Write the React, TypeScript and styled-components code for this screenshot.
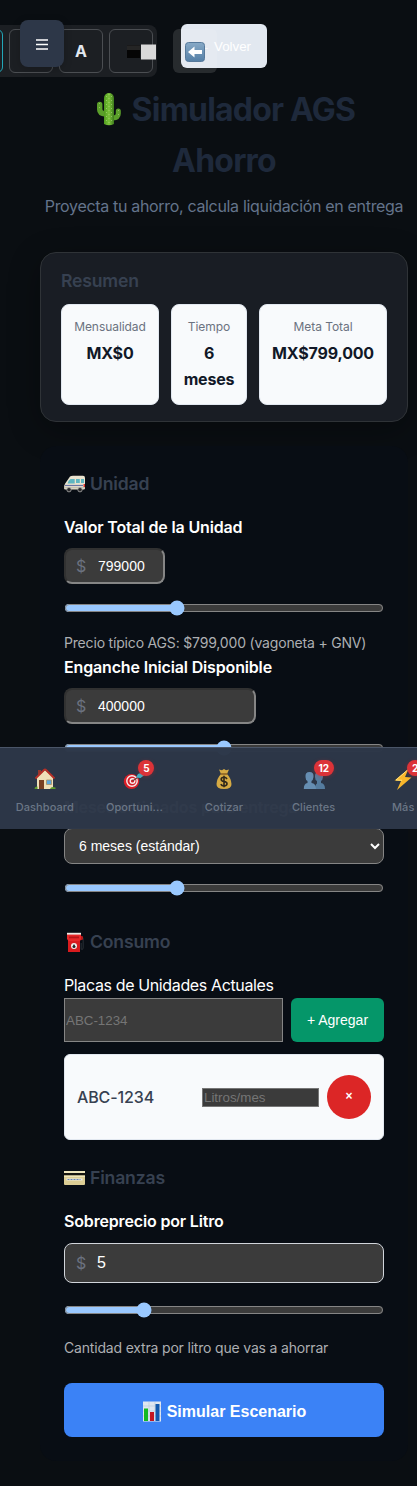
import React from "react";
import styled, { createGlobalStyle } from "styled-components";

const Global = createGlobalStyle`
  *, *::before, *::after { box-sizing: border-box; }
  html { background: #0a0e12; color-scheme: dark; overflow: hidden; }
  body {
    margin: 0;
    overflow: hidden;
    font-family: Inter, "Liberation Sans", sans-serif;
    font-size: 16px;
    line-height: 1.6;
    color: #fff;
  }
`;

const arial = `"Liberation Sans", Arial, sans-serif`;

const Page = styled.div`
  position: relative;
  width: 417px;
  height: 1486px;
  padding: 84px 9px 0 40px;
  overflow: hidden;
  background: #0a0e12;
`;

/* Floating controls */
const Toolbar = styled.div`
  position: absolute;
  top: 25px;
  right: 260px;
  display: flex;
  gap: 6px;
  padding: 4px;
  border-radius: 8px;
  background: #1c1f23;
`;

const ToolButton = styled.button<{ $active?: boolean }>`
  display: flex;
  align-items: center;
  justify-content: center;
  flex: none;
  width: 44px;
  height: 44px;
  padding: 0;
  border: 1px solid ${(p) => (p.$active ? "#22a7b8" : "#4b4e52")};
  border-radius: 6px;
  background: transparent;
  color: #e2e8f0;
  font: 700 16px Inter, sans-serif;
`;

const ContrastIcon = styled.svg`
  flex: none;
  margin-left: 19px;
  margin-top: 2px;
`;

const BackButton = styled.button`
  position: absolute;
  top: 24px;
  left: 181px;
  width: 86px;
  height: 44px;
  padding: 0;
  border: 0;
  border-radius: 6px;
  background: #e2e8f0;
  color: #fff;
  font: 13.333px ${arial};
`;

const BackTile = styled.div`
  position: absolute;
  top: 29px;
  left: 173px;
  display: flex;
  align-items: center;
  justify-content: center;
  width: 44px;
  height: 44px;
  padding-top: 2px;
  border-radius: 6px;
  background: rgba(255, 255, 255, 0.12);
`;

const MenuButton = styled.button`
  position: absolute;
  top: 20px;
  left: 20px;
  display: flex;
  align-items: center;
  justify-content: center;
  width: 44px;
  height: 47px;
  padding: 1px 0 0;
  border: 0;
  border-radius: 8px;
  background: #2d3748;
  box-shadow: 0 2px 8px rgba(0, 0, 0, 0.2);
`;

/* Header */
const Header = styled.header`
  text-align: center;
`;

const Title = styled.h1`
  margin: 0;
  color: #1e293b;
  font-size: 32px;
  font-weight: 700;
  letter-spacing: -0.8px;
  line-height: 51.2px;
  svg { vertical-align: -5px; margin-right: 0; }
`;

const Subtitle = styled.p`
  margin: 8px -10px 0;
  color: #64748b;
  letter-spacing: -0.325px;
  white-space: nowrap;
`;

/* Summary */
const Summary = styled.section`
  height: 170px;
  margin-top: 32px;
  padding: 14px 20px 0;
  border: 1px solid #2f3337;
  border-radius: 16px;
  background: #191d24;
  box-shadow: 0 8px 32px rgba(0, 0, 0, 0.3);
`;

const SectionTitle = styled.h3`
  display: flex;
  align-items: center;
  gap: 5px;
  height: 28px;
  margin: 0;
  color: #374151;
  font-size: 17.6px;
  font-weight: 600;
  letter-spacing: -0.18px;
  line-height: 28px;
`;

const Stats = styled.div`
  display: grid;
  grid-template-columns: 98px 76px 128px;
  gap: 12px;
  margin-top: 9px;
`;

const Stat = styled.div`
  height: 101px;
  padding: 12px 0;
  border: 1px solid #e2e8f0;
  border-radius: 8px;
  background: #f8fafc;
  text-align: center;
`;

const StatLabel = styled.div`
  margin-bottom: 5px;
  color: #6b7280;
  font-size: 12px;
  letter-spacing: -0.06px;
  line-height: 19.2px;
`;

const StatValue = styled.div`
  padding: 0 10px;
  color: #111827;
  font-weight: 700;
  letter-spacing: -0.17px;
  line-height: 25.6px;
`;

/* Form */
const Form = styled.section`
  height: 1015px;
  margin-top: 24px;
  padding: 24px;
  border-radius: 16px;
  background: #080d14;
`;

const Label = styled.label<{ $top: number; $plain?: boolean }>`
  display: block;
  height: 26px;
  margin-top: ${(p) => p.$top}px;
  font-weight: ${(p) => (p.$plain ? 400 : 600)};
  letter-spacing: ${(p) => (p.$plain ? -0.37 : -0.16)}px;
  line-height: 26px;
`;

const Field = styled.div<{ $top: number }>`
  position: relative;
  display: flex;
  margin-top: ${(p) => p.$top}px;
`;

const Currency = styled.span`
  position: absolute;
  top: 50%;
  left: 12px;
  color: #6b7280;
  line-height: 26px;
  transform: translateY(-50%);
`;

const MoneyInput = styled.input<{ $w: number }>`
  width: ${(p) => p.$w}px;
  height: 36px;
  padding: 1px 0 1px 32px;
  border-radius: 8px;
  font: 14px ${arial};
`;

const WideInput = styled.input`
  width: 320px;
  height: 40px;
  padding: 0 12px 0 32px;
  border: 1px solid #d1d5db;
  border-radius: 8px;
  font: 16px ${arial};
`;

const Range = styled.input<{ $top: number }>`
  display: block;
  width: 320px;
  height: 16px;
  margin: ${(p) => p.$top}px 0 0;
`;

const Hint = styled.p<{ $top: number }>`
  height: 22px;
  margin: ${(p) => p.$top}px 0 0;
  color: #adafb2;
  font-size: 14px;
  letter-spacing: -0.18px;
  line-height: 22px;
`;

const Select = styled.select`
  display: block;
  width: 320px;
  height: 36px;
  margin-top: 8px;
  padding: 0 10px;
  border: 1px solid #858585;
  border-radius: 8px;
  background-color: #3b3b3b;
  color: #fff;
  font: 14px ${arial};
`;

const AddRow = styled.div`
  display: flex;
  gap: 8px;
`;

const PlateInput = styled.input`
  width: 219px;
  height: 44px;
  padding: 1px;
  border: 1px solid #858585;
  font: 13.333px ${arial};
`;

const AddButton = styled.button`
  width: 93px;
  height: 44px;
  padding: 0;
  border: 0;
  border-radius: 6px;
  background: #059669;
  color: #fff;
  font: 14px ${arial};
`;

const PlateCard = styled.div`
  display: flex;
  align-items: center;
  height: 86px;
  margin-top: 12px;
  padding: 0 12px;
  border: 1px solid #e2e8f0;
  border-radius: 6px;
  background: #f8fafc;
`;

const Plate = styled.span`
  flex: 1;
  padding-top: 1px;
  color: #374151;
  font-weight: 500;
  letter-spacing: -0.12px;
`;

const LitersInput = styled.input`
  width: 117px;
  height: 19px;
  padding: 1px;
  border: 1px solid #767676;
  font: 13.333px ${arial};
`;

const RemoveButton = styled.button`
  width: 44px;
  height: 44px;
  margin-left: 8px;
  padding: 0 0 2px;
  border: 0;
  border-radius: 50%;
  background: #dc2626;
  color: #fff;
  font: 700 12px ${arial};
`;

const Submit = styled.button`
  display: flex;
  align-items: center;
  justify-content: center;
  gap: 5px;
  width: 320px;
  height: 54px;
  margin-top: 24px;
  padding: 3px 0 0;
  border: 0;
  border-radius: 8px;
  background: #3b82f6;
  color: #fff;
  font: 700 16px ${arial};
`;

const Gap = styled.div<{ $h: number }>`
  height: ${(p) => p.$h}px;
`;

/* Bottom navigation */
const Nav = styled.nav`
  position: absolute;
  top: 747px;
  left: 0;
  display: flex;
  width: 448px;
  height: 82px;
  border-top: 1px solid #4a5568;
  background: rgba(45, 55, 72, 0.985);
`;

const NavItem = styled.div`
  display: flex;
  flex-direction: column;
  align-items: center;
  width: 89.6px;
  padding-top: 20px;
`;

const NavIcon = styled.div`
  position: relative;
  height: 22px;
`;

const Badge = styled.span`
  position: absolute;
  top: -8px;
  right: -9px;
  min-width: 16px;
  height: 16px;
  padding: 0 4.5px;
  border-radius: 8px;
  background: #dc3338;
  box-shadow: 0 1px 4px rgba(220, 38, 38, 0.3);
  color: #fff;
  font-size: 10px;
  font-weight: 700;
  line-height: 16px;
  text-align: center;
`;

const NavLabel = styled.span`
  margin-top: 8px;
  color: #6b7686;
  font-size: 11px;
  font-weight: 500;
  letter-spacing: 0.08px;
  line-height: 18px;
`;

/* Drawings */
const Cactus = () => (
  <svg width="32" height="34" viewBox="0 0 32 34">
    <defs>
      <linearGradient id="cactus">
        <stop offset="0" stopColor="#4f9a1e" />
        <stop offset=".5" stopColor="#7cc43a" />
        <stop offset="1" stopColor="#3d7a1c" />
      </linearGradient>
    </defs>
    <g fill="#5b9f2a">
      <path d="M4 12.500a2.700 2.700 0 0 1 5.400 0V17q0 2 3 2.200v5.600Q4 24 4 17.500z" />
      <path d="M27.800 19a2.500 2.500 0 0 0-5 0v2.500q0 1.800-3 2v5q8-.5 8-7z" />
    </g>
    <path d="M11 6a5 5 0 0 1 10 0v26q-5 2.500-10 0z" fill="url(#cactus)" />
    <path d="M13.500 4v28M16 2v31M18.500 4v28M6.500 11v6M25.500 18v5" stroke="#c5e59a" strokeDasharray="1 3" opacity=".5" />
  </svg>
);

const Van = () => (
  <svg width="21" height="18" viewBox="0 0 21 18">
    <path d="M6 1.500Q7 .7 9 .7h10Q21 .7 21 3v10.500q0 1-1.500 1H1.500Q0 14.500 0 13q0-3 1.200-4.500z" fill="#e9e3cf" />
    <path d="M6.500 4h4.200v4.500H3.500q.8-3.500 3-4.500zM12 4h3.800v4H12zM17 4h3v4h-3z" fill="#5fb6c1" />
    <path d="M1 10.500h18" stroke="#6975a5" strokeWidth="1.200" />
    <path d="M0 12.800h21" stroke="#b7b2a4" />
    <path d="M19.500 9H21v3h-1.500z" fill="#d7322d" />
    <g fill="#29292b" stroke="#aaa" strokeWidth=".8">
      <circle cx="5" cy="14.700" r="2.200" /><circle cx="16" cy="14.700" r="2.200" />
    </g>
  </svg>
);

const Pump = () => (
  <svg width="21" height="21" viewBox="0 0 21 21">
    <path d="M16 4l2.500 1.500q1 1 .7 4v6q-.3 2.500-2 1.500V11" fill="none" stroke="#242a30" strokeWidth="1.200" />
    <path d="M16 3.500l3 1v3l-3 1z" fill="#b7191b" />
    <path d="M4 8h12v12H4z" fill="#d91b1e" />
    <path d="M3 1.500h14V7l-1.500 2h-11L3 7z" fill="#e92728" />
    <path d="M3 .8h14v1.800H3z" fill="#eceae6" />
    <path d="M5 4.500h10v1.800H5z" fill="#b91418" />
    <circle cx="10" cy="14" r="3" fill="#eee" />
    <path d="M10 12l1.500 2.500a1.500 1.500 0 1 1-3 0z" fill="#252525" />
  </svg>
);

const Card = () => (
  <svg width="21" height="16" viewBox="0 0 21 16">
    <rect y="1" width="21" height="14" rx="1" fill="#dccd94" />
    <path d="M0 1h21v2H0z" fill="#eee5bd" />
    <path d="M0 3h21v2.500H0z" fill="#15140f" />
    <path d="M0 5.500h21V7H0z" fill="#efe5b9" />
    <path d="M2.500 8.500h16v2h-16z" fill="#ece9dd" />
    <path d="M3.500 9.500h13" stroke="#6583b5" strokeDasharray="2 1" />
  </svg>
);

const Chart = () => (
  <svg width="20" height="21" viewBox="0 0 20 21">
    <path d="M1 .5h18v20H1z" fill="#dfe7f0" />
    <path d="M1 5h18M1 10h18M1 15h18M7 1v19M13 1v19" stroke="#bccbdd" strokeWidth=".7" />
    <path d="M2 7.500h4V20H2z" fill="#12b923" />
    <path d="M8 11h4v9H8z" fill="#c31620" />
    <path d="M13.500 3h4v17h-4z" fill="#1159ae" />
  </svg>
);

const ArrowTile = () => (
  <svg width="20" height="20" viewBox="0 0 20 20">
    <defs>
      <linearGradient id="arrow" x2="0" y2="1">
        <stop stopColor="#88aac7" /><stop offset="1" stopColor="#547fa6" />
      </linearGradient>
    </defs>
    <rect x=".5" y=".5" width="19" height="19" rx="3" fill="url(#arrow)" stroke="#56799b" />
    <path d="M3 10l6.500-5.500V8H17v4H9.500v3.500z" fill="#fff" />
  </svg>
);

const House = () => (
  <svg width="22" height="22" viewBox="0 0 22 22">
    <path d="M4 2h3v6H4z" fill="#96372c" />
    <path d="M3 9l8-7 8 7v12H3z" fill="#efdfb8" />
    <path d="M1.500 10.500L10 2q1-1 2 0l8.500 8.500" fill="none" stroke="#b52f27" strokeWidth="1.800" />
    <path d="M5 12h5v9H5z" fill="#783e22" />
    <path d="M12.500 12h5v4.500h-5z" fill="#5ba6dc" stroke="#a98e62" strokeWidth=".8" />
    <path d="M.5 21q0-3 3-2.500V21zM16 21q1-3 5.500-1.500V21z" fill="#5d9a2c" />
  </svg>
);

const Target = () => (
  <svg width="22" height="22" viewBox="0 0 22 22">
    <ellipse cx="8.500" cy="13.500" rx="7.700" ry="7.500" fill="#d91e27" />
    <circle cx="9" cy="13" r="5.200" fill="none" stroke="#f7eeee" strokeWidth="1.400" />
    <circle cx="9.500" cy="13" r="2.300" fill="none" stroke="#f7eeee" strokeWidth="1.400" />
    <path d="M9.500 13l8-5.500" stroke="#743c38" strokeWidth="1.200" />
    <path d="M13 9.500l2-3.500L20 4l-.5 2.500 2 .5-4 3z" fill="#3cb6ca" />
  </svg>
);

const Money = () => (
  <svg width="22" height="22" viewBox="0 0 22 22">
    <path d="M8 6L6 1.500l3 .8L11 1l2 1.300 3-.8L14 6q4 4 4.500 10 .3 5-7.500 5t-7.500-5q.5-6 4.500-10z" fill="#d6aa43" />
    <path d="M7.500 6h7" stroke="#875c20" strokeWidth="1.500" />
    <path d="M14 11q-1-1.700-3-1.700-2.800 0-2.800 2t2.800 2.200q3 .3 3 2.200T11 18q-2.300 0-3.200-1.800M11 7.800v11.500" fill="none" stroke="#30271a" strokeWidth="1.600" />
  </svg>
);

const People = () => (
  <svg width="22" height="22" viewBox="0 0 22 22" fill="#557c9f">
    <path d="M12 9q-.5-5 4-5t4 5q-.3 3-2 4v2q4 .5 4 6H12q0-4.500 2-5.500v-2.500q-2-1-2-4z" />
    <path d="M2.500 9q-.5-5 4-5t4 5q-.3 3-2 4v2q4.500.5 4.500 6H.8q0-5.500 3.700-6v-2q-2-1-2-4z" fill="#668eb2" />
  </svg>
);

const Bolt = () => (
  <svg width="22" height="22" viewBox="0 0 22 22">
    <path d="M16.500 1L2.500 12.500 9 13 5 22 19.500 9.500 13 9z" fill="#f9b72c" />
    <path d="M15.500 2L4 12l6 .3" fill="none" stroke="#ffe17a" />
  </svg>
);

const navItems = [
  { label: "Dashboard", icon: <House /> },
  { label: "Oportuni...", icon: <Target />, badge: "5" },
  { label: "Cotizar", icon: <Money /> },
  { label: "Clientes", icon: <People />, badge: "12" },
  { label: "Más", icon: <Bolt />, badge: "2" },
];

const stats = [
  ["Mensualidad", "MX$0"],
  ["Tiempo", "6 meses"],
  ["Meta Total", "MX$799,000"],
];

export default function App() {
  return (
    <Page>
      <Global />
      <Header>
        <Title><Cactus /> Simulador AGS<br />Ahorro</Title>
        <Subtitle>Proyecta tu ahorro, calcula liquidación en entrega</Subtitle>
      </Header>

      <Summary>
        <SectionTitle>Resumen</SectionTitle>
        <Stats>
          {stats.map(([label, value]) => (
            <Stat key={label}>
              <StatLabel>{label}</StatLabel>
              <StatValue>{value}</StatValue>
            </Stat>
          ))}
        </Stats>
      </Summary>

      <Form>
        <SectionTitle><Van />Unidad</SectionTitle>
        <Label $top={16}>Valor Total de la Unidad</Label>
        <Field $top={8}>
          <MoneyInput $w={101} defaultValue="799000" />
          <Currency>$</Currency>
        </Field>
        <Range $top={16} type="range" min={0} max={100} step="any" defaultValue={34.7} />
        <Hint $top={16}>Precio típico AGS: $799,000 (vagoneta + GNV)</Hint>
        <Label $top={0}>Enganche Inicial Disponible</Label>
        <Field $top={8}>
          <MoneyInput $w={192} defaultValue="400000" />
          <Currency>$</Currency>
        </Field>
        <Range $top={16} type="range" min={0} max={100} defaultValue={50} />
        <Gap $h={38} />
        <Label $top={0}>Meses estimados para entrega</Label>
        <Select defaultValue="6">
          <option value="6">6 meses (estándar)</option>
        </Select>
        <Range $top={16} type="range" min={0} max={100} step="any" defaultValue={34.7} />
        <Gap $h={32} />

        <SectionTitle><Pump />Consumo</SectionTitle>
        <Label $top={16} $plain>Placas de Unidades Actuales</Label>
        <AddRow>
          <PlateInput placeholder="ABC-1234" />
          <AddButton>+ Agregar</AddButton>
        </AddRow>
        <PlateCard>
          <Plate>ABC-1234</Plate>
          <LitersInput placeholder="Litros/mes" />
          <RemoveButton>×</RemoveButton>
        </PlateCard>
        <Gap $h={24} />

        <SectionTitle><Card />Finanzas</SectionTitle>
        <Label $top={16}>Sobreprecio por Litro</Label>
        <Field $top={9}>
          <WideInput defaultValue="5" />
          <Currency>$</Currency>
        </Field>
        <Range $top={19} type="range" min={0} max={100} step="any" defaultValue={23.7} />
        <Hint $top={19}>Cantidad extra por litro que vas a ahorrar</Hint>
        <Submit><Chart />Simular Escenario</Submit>
      </Form>

      <Toolbar>
        <ToolButton $active />
        <ToolButton />
        <ToolButton>A</ToolButton>
        <ToolButton>
          <ContrastIcon width="30" height="16" viewBox="0 0 30 16">
            <path d="M1 1.500h13V14H1z" fill="#050505" />
            <path d="M1 1.500h13V6H1z" fill="#252525" />
            <path d="M15 .5h15v15H15z" fill="#d9d9d9" />
          </ContrastIcon>
        </ToolButton>
      </Toolbar>
      <BackButton>← Volver</BackButton>
      <BackTile><ArrowTile /></BackTile>
      <MenuButton aria-label="Menú">
        <svg width="12" height="11" viewBox="0 0 12 11">
          <path d="M0 1h12M0 5.500h12M0 10h12" stroke="#fff" strokeWidth="1.400" />
        </svg>
      </MenuButton>

      <Nav>
        {navItems.map((item) => (
          <NavItem key={item.label}>
            <NavIcon>
              {item.icon}
              {item.badge && <Badge>{item.badge}</Badge>}
            </NavIcon>
            <NavLabel>{item.label}</NavLabel>
          </NavItem>
        ))}
      </Nav>
    </Page>
  );
}
